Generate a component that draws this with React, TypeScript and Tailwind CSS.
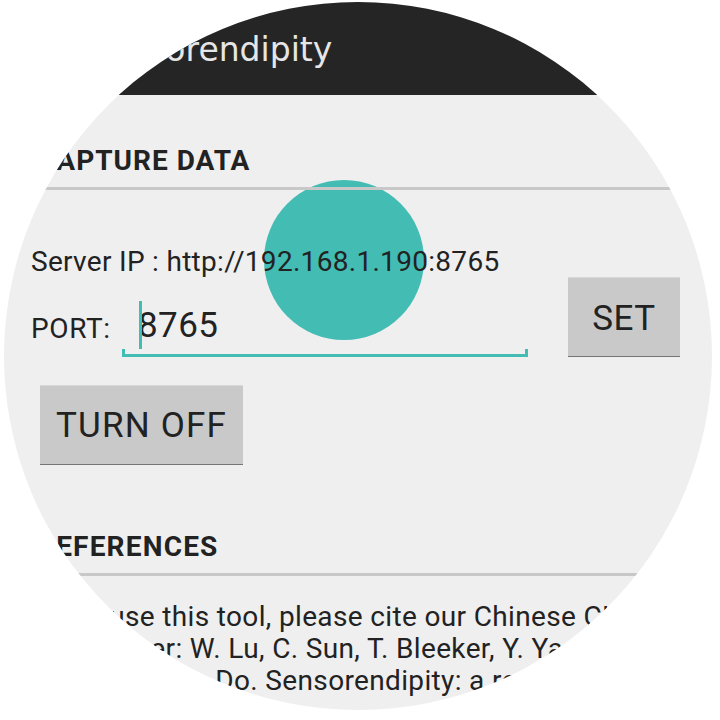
export default function App() {
  return (
    <div className="w-[720px] h-[720px] bg-white pt-[2px] pl-[4px] font-[Roboto,sans-serif]">
      {/* round watch face */}
      <div className="relative w-[708px] h-[708px] rounded-full overflow-hidden bg-[#efefef]">
        {/* touch indicator */}
        <div className="absolute left-[260px] top-[178px] w-[160px] h-[160px] rounded-full bg-[#43bcb4]" />

        <div className="relative">
          {/* Action bar */}
          <div className="h-[93px] bg-[#252525] pl-[82px] pt-[29px]">
            <h1 className="font-['DejaVu_Sans',sans-serif] font-normal text-[33px] leading-[38px] text-[#e6e6e6] whitespace-nowrap">
              Sensorendipity
            </h1>
          </div>

          {/* Capture data */}
          <h2 className="mt-[49px] pl-[33px] text-[28px] leading-[33px] font-bold tracking-[1px] text-[#222]">CAPTURE DATA</h2>
          <div className="mt-[10px] mx-[16px] h-[3px] bg-[#c8c8c8]" />

          <div className="pl-[27px]">
            <p className="mt-[57px] text-[28px] leading-[30px] tracking-[0.3px] text-[#222] whitespace-nowrap">
              Server IP : http://192.168.1.190:8765
            </p>

            <div className="flex items-start h-[80px]">
              <span className="w-[91px] mt-[35px] text-[28px] leading-[33px] tracking-[0.6px] text-[#222]">PORT:</span>
              <div className="relative w-[406px] h-[80px] flex flex-col">
                <span className="absolute left-[17px] top-[24px] w-[3px] h-[48px] bg-[#43bcb4]" />
                <span className="pt-[29px] pl-[16px] text-[35px] leading-[40px] tracking-[0.4px] text-[#222]">8765</span>
                <div className="flex-1" />
                <div className="h-[8px] border-x-[3px] border-b-[3px] border-[#43bcb4]" />
              </div>
              <button className="ml-[40px] w-[112px] h-[80px] pt-[4px] flex items-center justify-center bg-[#c9c9c9] border-t border-t-[#d8d8d8] border-b border-b-[#767676] text-[35px] leading-[40px] tracking-[0.6px] text-[#222]">
                SET
              </button>
            </div>

            <button className="mt-[28px] ml-[9px] w-[203px] h-[80px] pt-[2px] flex items-center justify-center bg-[#c9c9c9] border-t border-t-[#d8d8d8] border-b border-b-[#767676] text-[35px] leading-[40px] tracking-[1.2px] text-[#222]">
              TURN OFF
            </button>
          </div>

          {/* References */}
          <h2 className="mt-[65px] pl-[33px] text-[28px] leading-[33px] font-bold tracking-[1.2px] text-[#222]">REFERENCES</h2>
          <div className="mt-[10px] mx-[16px] h-[3px] bg-[#c8c8c8]" />

          <div className="mt-[25px] pl-[27px] text-[28px] leading-[32px] tracking-[0.35px] text-[#222] whitespace-nowrap">
            <p>If you use this tool, please cite our Chinese CHI 2015</p>
            <p>2015 paper: W. Lu, C. Sun, T. Bleeker, Y. Yang, and</p>
            <p>and Ellen Y.-L. Do. Sensorendipity: a real-time web-enabled</p>
          </div>
        </div>
      </div>
    </div>
  );
}
